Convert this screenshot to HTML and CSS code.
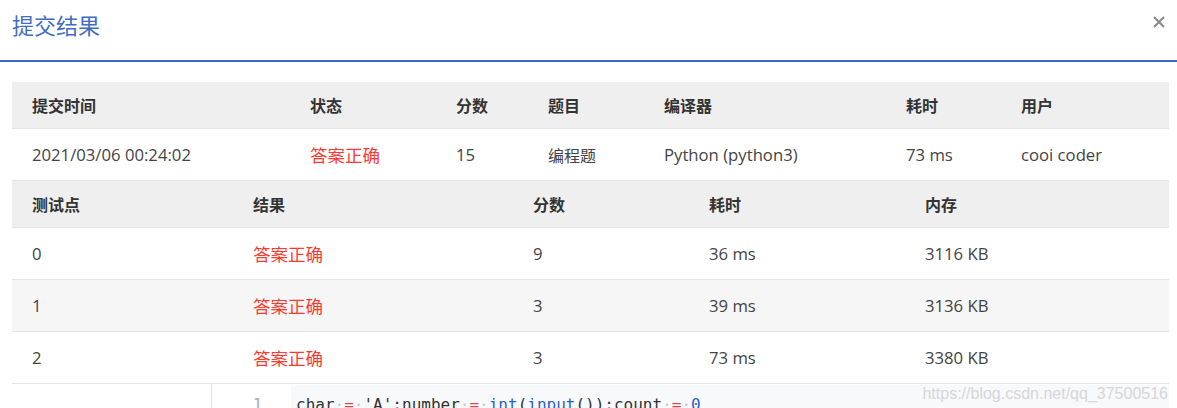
FILE: index.html
```html
<!DOCTYPE html>
<html lang="zh-CN">
<head>
<meta charset="utf-8">
<title>提交结果</title>
<link rel="stylesheet" href="styles.css">
</head>
<body>
<div class="modal">
  <div class="modal-header">
    <h2 class="modal-title">提交结果</h2>
    <button class="close" aria-label="关闭">
      <svg width="12" height="12" viewBox="0 0 12 12"><path d="M1 1L11 11M11 1L1 11" stroke="#8a8a8a" stroke-width="2" fill="none"/></svg>
    </button>
  </div>
  <div class="modal-body">
    <div class="tbl summary">
      <div class="row head">
        <div class="c">提交时间</div><div class="c">状态</div><div class="c">分数</div><div class="c">题目</div><div class="c">编译器</div><div class="c">耗时</div><div class="c">用户</div>
      </div>
      <div class="row">
        <div class="c">2021/03/06 00:24:02</div><div class="c ok">答案正确</div><div class="c">15</div><div class="c cjk">编程题</div><div class="c">Python (python3)</div><div class="c">73 ms</div><div class="c">cooi coder</div>
      </div>
    </div>
    <div class="tbl cases">
      <div class="row head">
        <div class="c">测试点</div><div class="c">结果</div><div class="c">分数</div><div class="c">耗时</div><div class="c">内存</div>
      </div>
      <div class="row">
        <div class="c">0</div><div class="c ok">答案正确</div><div class="c">9</div><div class="c">36 ms</div><div class="c">3116 KB</div>
      </div>
      <div class="row striped">
        <div class="c">1</div><div class="c ok">答案正确</div><div class="c">3</div><div class="c">39 ms</div><div class="c">3136 KB</div>
      </div>
      <div class="row">
        <div class="c">2</div><div class="c ok">答案正确</div><div class="c">3</div><div class="c">73 ms</div><div class="c">3380 KB</div>
      </div>
    </div>
    <div class="code">
      <div class="gutter">1</div>
      <pre class="src"><span>char</span><span class="ws">·</span><span class="op">=</span><span class="ws">·</span><span>'A'</span><span>:number</span><span class="ws">·</span><span class="op">=</span><span class="ws">·</span><span class="fn">int</span><span>(</span><span class="fn">input</span><span>()):count</span><span class="ws">·</span><span class="op">=</span><span class="ws">·</span><span class="num">0</span></pre>
    </div>
    <div class="watermark">https://blog.csdn.net/qq_37500516</div>
  </div>
</div>
</body>
</html>
```
FILE: styles.css
```css
html, body {
  margin: 0;
  padding: 0;
  background: #fff;
  overflow: hidden;
}
body {
  font-family: "Open Sans", "Noto Sans CJK SC", sans-serif;
  color: #444;
  width: 1177px;
  height: 408px;
}
.modal-header {
  height: 62px;
  box-sizing: border-box;
  padding: 10px 12px 0 12px;
  border-bottom: 2px solid #3d68c2;
  display: flex;
  justify-content: space-between;
  align-items: flex-start;
}
.modal-title {
  margin: 0;
  font-family: "Noto Sans CJK SC", sans-serif;
  font-weight: 400;
  font-size: 22px;
  line-height: 28px;
  color: #3f6dc4;
}
.close {
  border: 0;
  background: none;
  padding: 0;
  margin: 6px 0 0 0;
  width: 12px;
  height: 12px;
  display: flex;
}
.modal-body {
  position: relative;
  padding: 20px 8px 0 12px;
}
.tbl .row {
  display: grid;
  border-bottom: 1px solid #e4e4e4;
  height: 51px;
  align-items: center;
  font-size: 16.7px;
}
.tbl .row.head {
  height: 46px;
  background: #efefef;
  font-family: "Noto Sans CJK SC", sans-serif;
  font-weight: 700;
  font-size: 16px;
  color: #333;
}
.tbl .row.striped {
  background: #f6f6f6;
}
.summary .row {
  grid-template-columns: 278px 146px 92px 116px 242px 115px 1fr;
}
.cases .row {
  grid-template-columns: 221px 280px 176px 216px 1fr;
}
.c {
  padding-left: 20px;
  white-space: nowrap;
}
.cjk {
  font-family: "Noto Sans CJK SC", sans-serif;
  font-size: 16px;
}
.ok {
  font-family: "Noto Sans CJK SC", sans-serif;
  font-size: 17.5px;
  color: #fb3a30;
}
.code {
  display: flex;
  margin-left: 199px;
  border-left: 1px solid #e2e2e2;
  height: 24px;
  padding-top: 1px;
}
.gutter {
  width: 50px;
  text-align: right;
  padding-right: 32px;
  font-family: "DejaVu Sans Mono", monospace;
  font-size: 15px;
  color: #a8a8a8;
  line-height: 40px;
}
.src {
  flex: 1;
  margin: 0 0 0 -3px;
  padding: 0 0 0 5px;
  background: #f8f9fb;
  font-family: "DejaVu Sans Mono", monospace;
  font-size: 16px;
  line-height: 40px;
  color: #333;
}
.src .ws { color: #c8c8c8; }
.src .op { color: #e0454a; }
.src .fn { color: #2a62c9; }
.src .num { color: #2a62c9; }
.watermark {
  position: absolute;
  right: 9px;
  bottom: 6px;
  font-family: "Liberation Sans", Arial, sans-serif;
  font-size: 16px;
  color: #d6d6d6;
}
```
